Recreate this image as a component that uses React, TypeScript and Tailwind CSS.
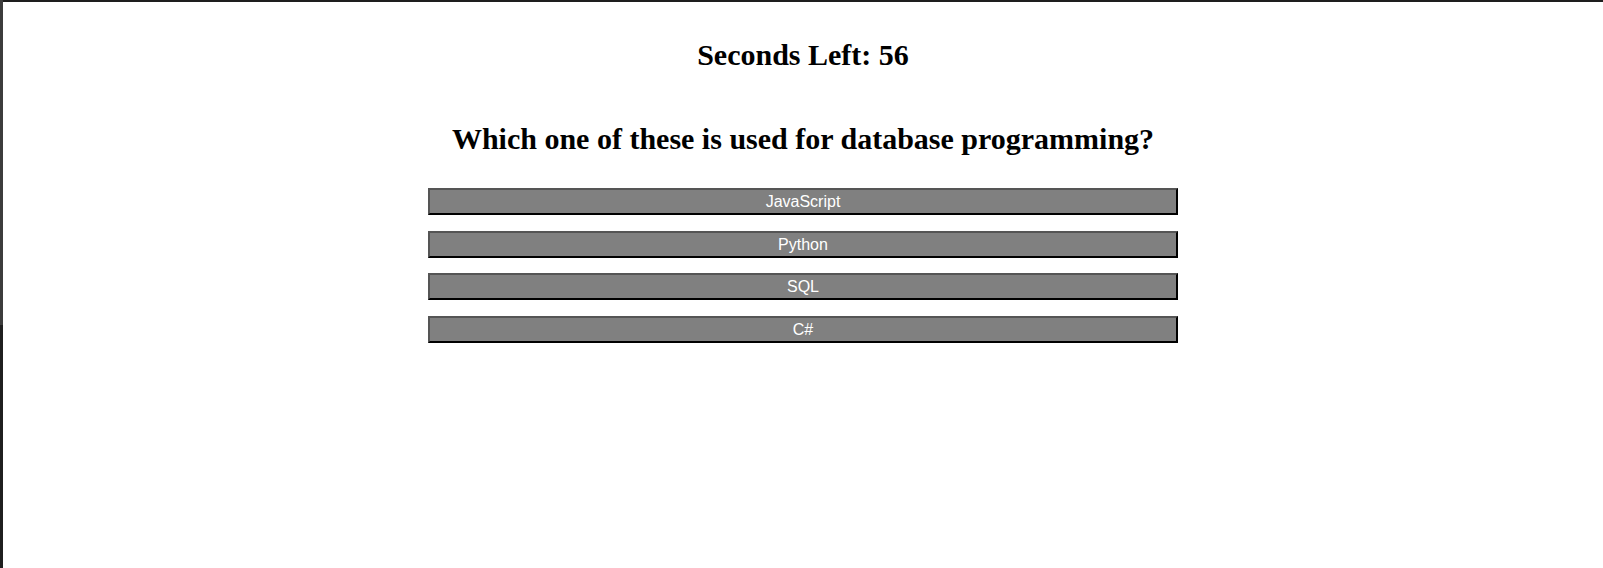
import React from "react";

const options = ["JavaScript", "Python", "SQL", "C#"];

export default function App() {
  return (
    <div className="flex h-[568px] w-full bg-white">
      <div className="flex w-[3px] flex-col">
        <div className="h-[325px] bg-[#3c3c3c]" />
        <div className="flex-1 bg-[#1f1f1f]" />
      </div>
      <div className="flex flex-1 flex-col">
        <div className="h-[2px] bg-[#1e1e1e]" />
        <div className="flex flex-col items-center pt-[36px] font-['Liberation_Serif',serif] text-black">
          <h2 className="text-[30px] font-bold leading-[34px]">Seconds Left: 56</h2>
          <h1 className="mt-[50px] text-[30px] font-bold leading-[34px]">
            Which one of these is used for database programming?
          </h1>
          <div className="mt-[32px] flex w-[750px] flex-col gap-[15.5px]">
            {options.map((o) => (
              <button
                key={o}
                className="h-[27px] w-full border-2 border-t-[#555555] border-l-[#555555] border-b-black border-r-black bg-[#808080] font-['Liberation_Sans',Arial,sans-serif] text-[16px] leading-[19px] text-white"
              >
                {o}
              </button>
            ))}
          </div>
        </div>
      </div>
    </div>
  );
}
